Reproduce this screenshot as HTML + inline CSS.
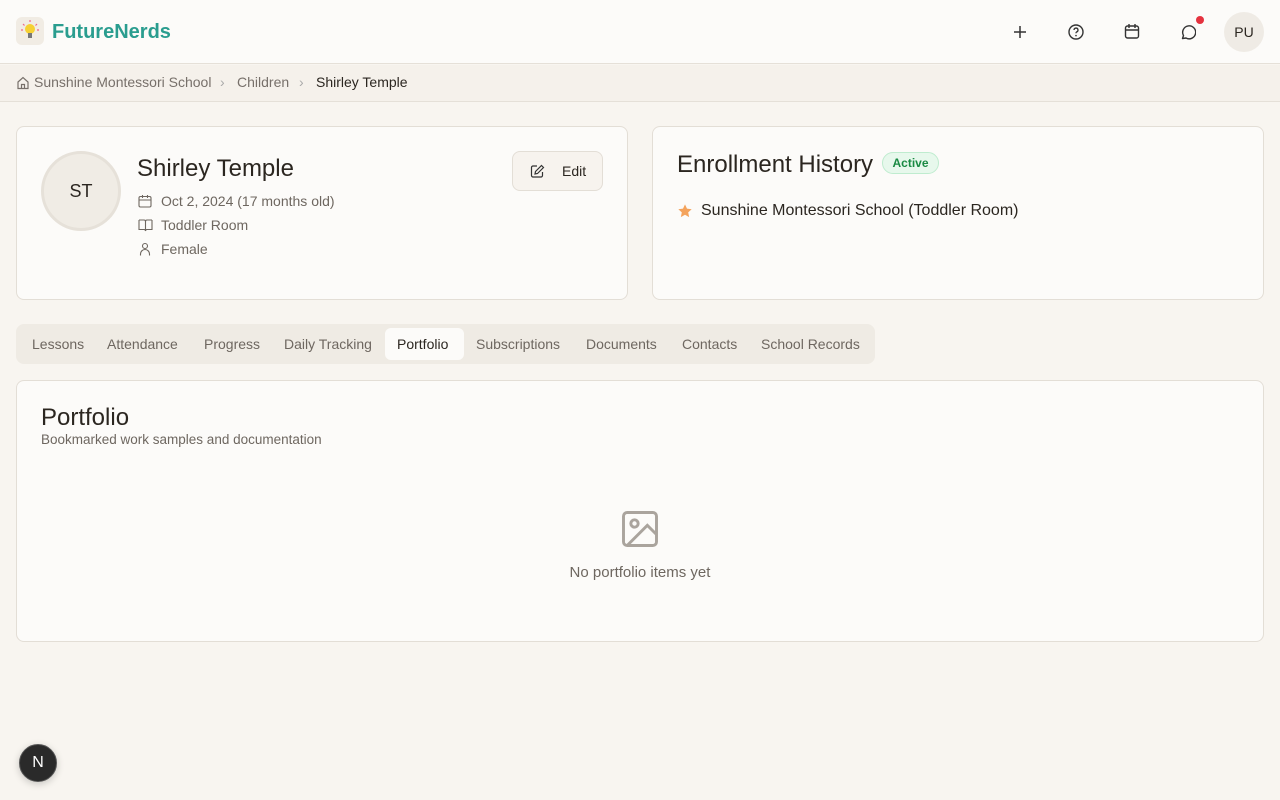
<!DOCTYPE html>
<html><head><meta charset="utf-8"><style>
*{box-sizing:border-box;margin:0;padding:0}
body{width:1280px;height:800px;background:#f8f5f0;font-family:"Liberation Sans",sans-serif;color:#2b2620;position:relative;overflow:hidden}
.hdr{position:absolute;left:0;top:0;width:1280px;height:64px;background:#fcfbf9;border-bottom:1px solid #e5e0d8}
.logo{position:absolute;left:16px;top:17px;width:28px;height:28px;border-radius:6px;background:#f1ece4}
.brand{position:absolute;left:52px;top:21px;font-size:20px;font-weight:bold;color:#2a9d8f}
.ic{position:absolute;top:22px}
.av{position:absolute;left:1224px;top:12px;width:40px;height:40px;border-radius:50%;background:#efebe5;font-size:14px;text-align:center;line-height:40px}
.bc{position:absolute;left:0;top:65px;width:1280px;height:37px;background:#f5f1eb;border-bottom:1px solid #e5e0d8;font-size:14px;color:#77706a}
.card{position:absolute;background:#fcfbf9;border:1px solid #e3ded6;border-radius:8px}
.meta{position:absolute;left:144px;font-size:14px;color:#6e6760}
.tabs{position:absolute;left:16px;top:324px;width:859px;height:40px;background:#efebe4;border-radius:8px;font-size:14px;color:#6e6760}
.tabs span{position:absolute;top:12px}
</style></head><body>
<div class="hdr">
 <div class="logo"><svg width="28" height="28" viewBox="0 0 28 28"><circle cx="14" cy="12" r="5" fill="#f5d033"/><rect x="12" y="16" width="4" height="5" fill="#777"/><g stroke="#e68" stroke-width="1.2"><path d="M14 3v2M7 7l1.5 1.5M21 7l-1.5 1.5M5 13h2M21 13h2"/></g></svg></div>
 <div class="brand">FutureNerds</div>
 <svg class="ic" style="left:1012px" width="16" height="20" viewBox="0 0 16 20"><path d="M8 4v12M2 10h12" stroke="#333" stroke-width="1.5"/></svg>
 <svg class="ic" style="left:1068px" width="16" height="20" viewBox="0 0 16 20"><circle cx="8" cy="10" r="7" fill="none" stroke="#333" stroke-width="1.4"/><path d="M6 8a2 2 0 1 1 2.5 2c-.5.3-.5.7-.5 1.3" fill="none" stroke="#333" stroke-width="1.3"/><circle cx="8" cy="13.6" r=".8" fill="#333"/></svg>
 <svg class="ic" style="left:1124px" width="16" height="20" viewBox="0 0 16 20"><rect x="1.5" y="4" width="13" height="12" rx="2" fill="none" stroke="#333" stroke-width="1.4"/><path d="M1.5 8h13M5 2v4M11 2v4" stroke="#333" stroke-width="1.4"/></svg>
 <svg class="ic" style="left:1180px" width="16" height="20" viewBox="0 0 16 20"><path d="M2.5 16.5l1-3A6.5 6.5 0 1 1 6 16z" fill="none" stroke="#333" stroke-width="1.4" stroke-linejoin="round"/></svg>
 <div style="position:absolute;left:1196px;top:16px;width:8px;height:8px;border-radius:50%;background:#e5323f"></div>
 <div class="av">PU</div>
</div>
<div class="bc">
 <svg style="position:absolute;left:16px;top:11px" width="14" height="14" viewBox="0 0 14 14"><path d="M2 6l5-4.5L12 6v6.5H2z M5.5 12.5V8.5h3v4" fill="none" stroke="#77706a" stroke-width="1.2"/></svg>
 <span style="position:absolute;left:34px;top:9px">Sunshine Montessori School</span>
 <span style="position:absolute;left:220px;top:9px;color:#aaa">›</span>
 <span style="position:absolute;left:237px;top:9px">Children</span>
 <span style="position:absolute;left:299px;top:9px;color:#aaa">›</span>
 <span style="position:absolute;left:316px;top:9px;color:#2b2620">Shirley Temple</span>
</div>
<div class="card" style="left:16px;top:126px;width:612px;height:174px">
 <div style="position:absolute;left:24px;top:24px;width:80px;height:80px;border-radius:50%;background:#f0ece5;border:3px solid #e6e1d9;text-align:center;line-height:74px;font-size:18px">ST</div>
 <div style="position:absolute;left:120px;top:28px;font-size:24px">Shirley Temple</div>
 <svg style="position:absolute;left:121px;top:67px" width="14" height="14" viewBox="0 0 14 14"><rect x="1" y="2.5" width="12" height="10.5" rx="1.5" fill="none" stroke="#6e6760" stroke-width="1.1"/><path d="M1 6h12M4.5 1v3M9.5 1v3" stroke="#6e6760" stroke-width="1.1"/></svg>
 <div class="meta" style="left:144px;top:66px">Oct 2, 2024 (17 months old)</div>
 <svg style="position:absolute;left:121px;top:91px" width="15" height="14" viewBox="0 0 15 14"><path d="M1 2h5a1.5 1.5 0 0 1 1.5 1.5V13 M14 2H9a1.5 1.5 0 0 0-1.5 1.5 M1 2v9.5h5.5l1 1 1-1H14V2" fill="none" stroke="#6e6760" stroke-width="1.1"/></svg>
 <div class="meta" style="left:144px;top:90px">Toddler Room</div>
 <svg style="position:absolute;left:121px;top:115px" width="14" height="14" viewBox="0 0 14 14"><circle cx="7" cy="4" r="2.5" fill="none" stroke="#6e6760" stroke-width="1.1"/><path d="M2.5 13.5v-1.5a4.5 4.5 0 0 1 9 0v1.5" fill="none" stroke="#6e6760" stroke-width="1.1"/></svg>
 <div class="meta" style="left:144px;top:114px">Female</div>
 <div style="position:absolute;left:495px;top:24px;width:91px;height:40px;border:1px solid #e3ded6;border-radius:8px;background:#f7f3ee;font-size:14px">
  <svg style="position:absolute;left:17px;top:12px" width="15" height="15" viewBox="0 0 15 15"><path d="M7 2H3a1.5 1.5 0 0 0-1.5 1.5v8A1.5 1.5 0 0 0 3 13h8a1.5 1.5 0 0 0 1.5-1.5V8 M11.5 1.5l2 2L7.5 9.5 5 10l.5-2.5z" fill="none" stroke="#333" stroke-width="1.2"/></svg>
  <span style="position:absolute;left:49px;top:11px">Edit</span></div>
</div>
<div class="card" style="left:652px;top:126px;width:612px;height:174px">
 <div style="position:absolute;left:24px;top:24px;font-size:24px">Enrollment History</div>
 <div style="position:absolute;left:229px;top:25px;height:22px;width:57px;border:1px solid #bfeccf;background:#e7f8ec;border-radius:11px;color:#1a8a43;font-size:12px;font-weight:bold;text-align:center;line-height:20px">Active</div>
 <svg style="position:absolute;left:24px;top:76px" width="16" height="16" viewBox="0 0 24 24"><path d="M12 2l3 6.5 7 .8-5.2 4.8 1.4 7L12 17.6 5.8 21.1l1.4-7L2 9.3l7-.8z" fill="#f4a35c"/></svg>
 <div style="position:absolute;left:48px;top:75px;font-size:16px">Sunshine Montessori School (Toddler Room)</div>
</div>
<div class="tabs">
 <span style="left:16px">Lessons</span><span style="left:91px">Attendance</span><span style="left:188px">Progress</span><span style="left:268px">Daily Tracking</span>
 <div style="position:absolute;left:369px;top:4px;width:79px;height:32px;background:#fcfbf9;border-radius:6px"></div>
 <span style="left:381px;color:#2b2620">Portfolio</span><span style="left:460px">Subscriptions</span><span style="left:570px">Documents</span><span style="left:666px">Contacts</span><span style="left:745px">School Records</span>
</div>
<div class="card" style="left:16px;top:380px;width:1248px;height:262px">
 <div style="position:absolute;left:24px;top:23px;font-size:24px">Portfolio</div>
 <div style="position:absolute;left:24px;top:51px;font-size:13.5px;color:#6e6760">Bookmarked work samples and documentation</div>
 <svg style="position:absolute;left:601px;top:126px" width="44" height="44" viewBox="0 0 24 24"><rect x="3" y="3" width="18" height="18" rx="2" fill="none" stroke="#aaa49d" stroke-width="1.6"/><circle cx="9" cy="9" r="2" fill="none" stroke="#aaa49d" stroke-width="1.6"/><path d="M21 15l-5-5L5 21" fill="none" stroke="#aaa49d" stroke-width="1.6"/></svg>
 <div style="position:absolute;left:0;width:1246px;top:183px;text-align:center;font-size:15px;color:#6e6760">No portfolio items yet</div>
</div>
<div style="position:absolute;left:19px;top:744px;width:38px;height:38px;border-radius:50%;background:#2a2a2a;border:1px solid #555;color:#fff;font-size:16px;text-align:center;line-height:36px;box-shadow:0 2px 8px rgba(0,0,0,.2)">N</div>
</body></html>
